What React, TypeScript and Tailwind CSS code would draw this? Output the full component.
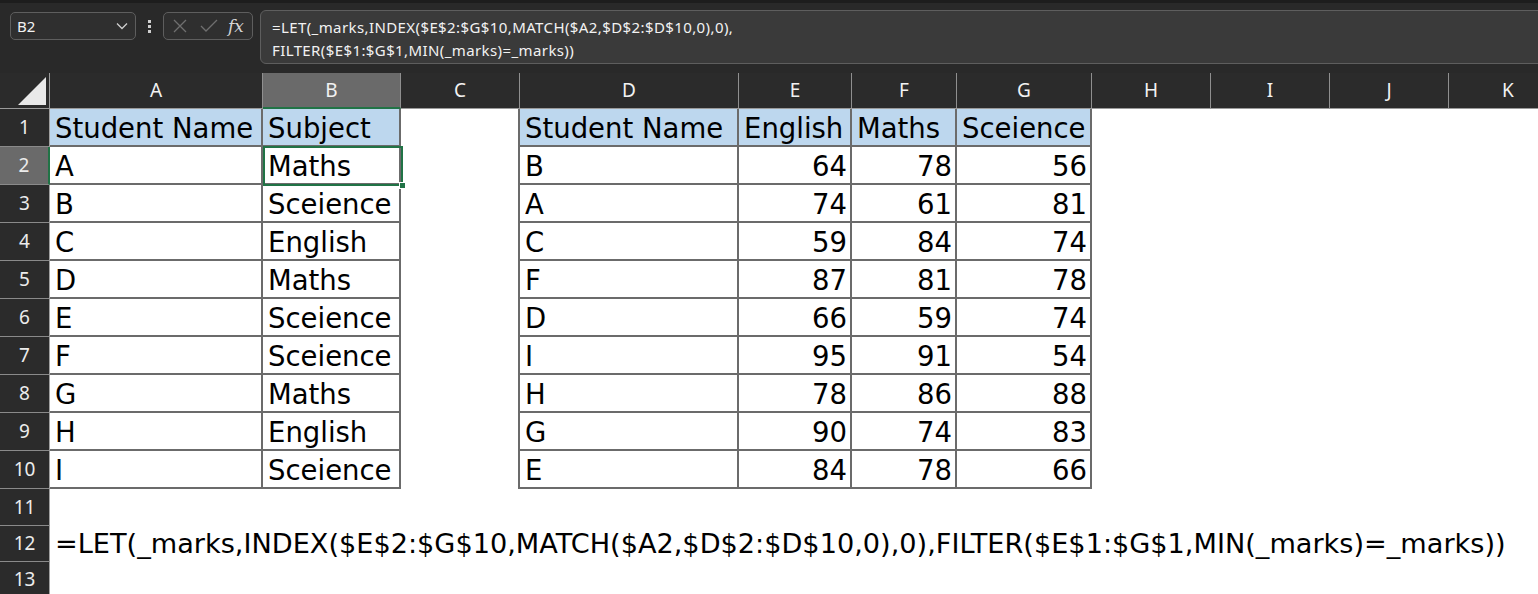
import React from 'react';

const COLS: { l: string; w: string }[] = [
  { l: 'A', w: 'w-[213px]' },
  { l: 'B', w: 'w-[138px]' },
  { l: 'C', w: 'w-[119px]' },
  { l: 'D', w: 'w-[219px]' },
  { l: 'E', w: 'w-[113px]' },
  { l: 'F', w: 'w-[105px]' },
  { l: 'G', w: 'w-[135px]' },
  { l: 'H', w: 'w-[119px]' },
  { l: 'I', w: 'w-[119px]' },
  { l: 'J', w: 'w-[119px]' },
  { l: 'K', w: 'w-[119px]' },
];

const T1: [string, string][] = [
  ['A', 'Maths'],
  ['B', 'Sceience'],
  ['C', 'English'],
  ['D', 'Maths'],
  ['E', 'Sceience'],
  ['F', 'Sceience'],
  ['G', 'Maths'],
  ['H', 'English'],
  ['I', 'Sceience'],
];

const T2: [string, number, number, number][] = [
  ['B', 64, 78, 56],
  ['A', 74, 61, 81],
  ['C', 59, 84, 74],
  ['F', 87, 81, 78],
  ['D', 66, 59, 74],
  ['I', 95, 91, 54],
  ['H', 78, 86, 88],
  ['G', 90, 74, 83],
  ['E', 84, 78, 66],
];

const FORMULA =
  '=LET(_marks,INDEX($E$2:$G$10,MATCH($A2,$D$2:$D$10,0),0),FILTER($E$1:$G$1,MIN(_marks)=_marks))';

type CellSpec = { t?: string; right?: boolean; tb?: boolean; hd?: boolean; edgeR?: boolean; sel?: boolean; f?: boolean };

function buildRow(r: number): CellSpec[] {
  const cells: CellSpec[] = COLS.map(() => ({}));
  if (r === 1) {
    cells[0] = { t: 'Student Name', tb: true, hd: true };
    cells[1] = { t: 'Subject', tb: true, hd: true };
    cells[2] = { edgeR: true };
    cells[3] = { t: 'Student Name', tb: true, hd: true };
    cells[4] = { t: 'English', tb: true, hd: true };
    cells[5] = { t: 'Maths', tb: true, hd: true };
    cells[6] = { t: 'Sceience', tb: true, hd: true };
  } else if (r >= 2 && r <= 10) {
    const a = T1[r - 2];
    const b = T2[r - 2];
    cells[0] = { t: a[0], tb: true };
    cells[1] = { t: a[1], tb: true, sel: r === 2 };
    cells[2] = { edgeR: true };
    cells[3] = { t: b[0], tb: true };
    cells[4] = { t: String(b[1]), tb: true, right: true };
    cells[5] = { t: String(b[2]), tb: true, right: true };
    cells[6] = { t: String(b[3]), tb: true, right: true };
  } else if (r === 12) {
    cells[0] = { t: FORMULA, f: true };
  }
  return cells;
}

function Cell({ spec, w }: { spec: CellSpec; w: string }) {
  const border = spec.tb
    ? 'border-r-2 border-b-2 border-[#6b6b6b]'
    : spec.edgeR
    ? 'border-r-2 border-[#6b6b6b]'
    : '';
  const bg = spec.hd ? 'bg-[#bdd7ee]' : '';
  return (
    <div className={`relative h-full shrink-0 ${w} ${border} ${bg}`}>
      {spec.t !== undefined && (
        <div
          className={`whitespace-nowrap text-black ${
            spec.f ? 'pt-[1px] text-[27.15px] leading-[34px]' : 'pt-[2px] text-[27.5px] leading-[34px]'
          } ${spec.right ? 'pr-[3px] text-right' : 'pl-[5px] text-left'}`}
        >
          {spec.t}
        </div>
      )}
      {spec.sel && (
        <div className="pointer-events-none absolute left-0 top-[-1px] z-10 h-[40px] w-[140px] border-2 border-[#217346]">
          <div className="absolute bottom-[-5px] right-[-5px] h-[7px] w-[7px] border border-white bg-[#217346]" />
        </div>
      )}
    </div>
  );
}

function Toolbar() {
  return (
    <div className="flex h-[73px] items-start border-t-[3px] border-[#1d1d1d] bg-[#292929] pl-[10px] font-['Noto_Sans',sans-serif]">
      <div className="mt-[9px] flex h-[28px] w-[126px] shrink-0 items-center justify-between rounded-[5px] border border-[#5e5e5e] bg-[#2f2f2f] pl-[6px] pr-[7px] text-[15px] text-[#f2f2f2]">
        <span>B2</span>
        <svg width="12" height="8" viewBox="0 0 12 8" fill="none">
          <path d="M1 1.5 L6 6.5 L11 1.5" stroke="#cfcfcf" strokeWidth="1.3" />
        </svg>
      </div>
      <div className="mt-[17px] flex w-[27px] shrink-0 flex-col items-center gap-[2px]">
        <div className="h-[3px] w-[3px] bg-[#cfcfcf]" />
        <div className="h-[3px] w-[3px] bg-[#cfcfcf]" />
        <div className="h-[3px] w-[3px] bg-[#cfcfcf]" />
      </div>
      <div className="mt-[9px] flex h-[28px] w-[90px] shrink-0 items-center rounded-[5px] border border-[#5e5e5e] bg-[#2f2f2f] pl-[8px]">
        <svg width="16" height="16" viewBox="0 0 16 16" fill="none">
          <path d="M2 2 L14 14 M14 2 L2 14" stroke="#6f6f6f" strokeWidth="1.3" />
        </svg>
        <svg className="ml-[12px]" width="18" height="14" viewBox="0 0 18 14" fill="none">
          <path d="M1 7 L6 12 L17 1" stroke="#6f6f6f" strokeWidth="1.3" />
        </svg>
        <span className="ml-[10px] font-['DejaVu_Serif',serif] text-[17px] italic leading-none text-[#d6d6d6]">fx</span>
      </div>
      <div className="ml-[7px] mr-[-12px] mt-[7px] h-[54px] flex-1 rounded-[6px] border border-[#5e5e5e] bg-[#3a3a3a] pl-[11px] pt-[5px] text-[15px] leading-[23px] tracking-[0.4px] text-[#f2f2f2]">
        <div className="whitespace-nowrap">=LET(_marks,INDEX($E$2:$G$10,MATCH($A2,$D$2:$D$10,0),0),</div>
        <div className="whitespace-nowrap">FILTER($E$1:$G$1,MIN(_marks)=_marks))</div>
      </div>
    </div>
  );
}

function ColumnHeader() {
  return (
    <div className="flex h-[36px] bg-[#2b2b2b] font-['Noto_Sans',sans-serif] text-[19px] text-[#f2f2f2]">
      <div className="relative h-full w-[50px] shrink-0 border-b border-r border-[#9a9a9a]">
        <svg className="absolute left-0 top-0" width="50" height="36" viewBox="0 0 50 36">
          <polygon points="18,32 46,32 46,4" fill="#e9e9e9" />
        </svg>
      </div>
      {COLS.map((c) => (
        <div
          key={c.l}
          className={`flex h-full shrink-0 items-center justify-center border-r border-[#8f8f8f] ${c.w} ${
            c.l === 'B' ? 'border-b-2 border-b-[#217346] bg-[#6a6a6a]' : 'border-b border-b-[#9a9a9a]'
          }`}
        >
          {c.l}
        </div>
      ))}
    </div>
  );
}

function rowHeight(r: number) {
  if (r === 11) return 'h-[37px]';
  if (r >= 12) return 'h-[36px]';
  return 'h-[38px]';
}

export default function App() {
  const rows = Array.from({ length: 13 }, (_, i) => i + 1);
  return (
    <div className="h-[594px] w-[1538px] overflow-hidden bg-white">
      <Toolbar />
      <ColumnHeader />
      <div className="flex flex-col">
        {rows.map((r) => {
          const cells = buildRow(r);
          return (
            <div key={r} className={`flex shrink-0 ${rowHeight(r)}`}>
              <div
                className={`flex h-full w-[50px] shrink-0 items-center justify-center border-b border-b-[#8a8a8a] font-['Noto_Sans',sans-serif] text-[19px] text-[#ececec] ${
                  r === 2 ? 'border-r-2 border-r-[#217346] bg-[#6a6a6a]' : 'border-r border-r-[#a0a0a0] bg-[#2b2b2b]'
                }`}
              >
                {r}
              </div>
              <div className="flex h-full font-['DejaVu_Sans',sans-serif]">
                {cells.map((s, i) => (
                  <Cell key={i} spec={s} w={COLS[i].w} />
                ))}
              </div>
            </div>
          );
        })}
      </div>
    </div>
  );
}
